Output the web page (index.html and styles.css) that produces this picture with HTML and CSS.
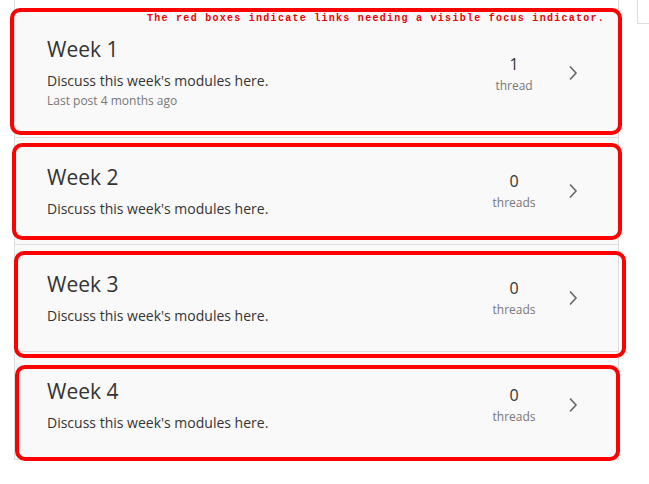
FILE: index.html
```html
<!DOCTYPE html>
<html>
<head>
<meta charset="utf-8">
<link rel="stylesheet" href="styles.css">
</head>
<body>
<div class="page">
  <div class="list">
    <a class="card" href="#">
      <div class="info">
        <div class="title">Week 1</div>
        <div class="desc">Discuss this week's modules here.</div>
        <div class="last">Last post 4 months ago</div>
      </div>
      <div class="meta"><div class="count">1</div><div class="label">thread</div></div>
      <svg class="chev" width="10" height="16" viewBox="0 0 10 16"><path d="M2 1.5 L8 8 L2 14.5" fill="none" stroke="#666" stroke-width="1.6"/></svg>
    </a>
    <a class="card" href="#">
      <div class="info">
        <div class="title">Week 2</div>
        <div class="desc">Discuss this week's modules here.</div>
      </div>
      <div class="meta"><div class="count">0</div><div class="label">threads</div></div>
      <svg class="chev" width="10" height="16" viewBox="0 0 10 16"><path d="M2 1.5 L8 8 L2 14.5" fill="none" stroke="#666" stroke-width="1.6"/></svg>
    </a>
    <a class="card" href="#">
      <div class="info">
        <div class="title">Week 3</div>
        <div class="desc">Discuss this week's modules here.</div>
      </div>
      <div class="meta"><div class="count">0</div><div class="label">threads</div></div>
      <svg class="chev" width="10" height="16" viewBox="0 0 10 16"><path d="M2 1.5 L8 8 L2 14.5" fill="none" stroke="#666" stroke-width="1.6"/></svg>
    </a>
    <a class="card last-card" href="#">
      <div class="info">
        <div class="title">Week 4</div>
        <div class="desc">Discuss this week's modules here.</div>
      </div>
      <div class="meta"><div class="count">0</div><div class="label">threads</div></div>
      <svg class="chev" width="10" height="16" viewBox="0 0 10 16"><path d="M2 1.5 L8 8 L2 14.5" fill="none" stroke="#666" stroke-width="1.6"/></svg>
    </a>
  </div>
  <div class="side"></div>
</div>
<div class="note">The red boxes indicate links needing a visible focus indicator.</div>
<div class="focus f1"></div>
<div class="focus f2"></div>
<div class="focus f3"></div>
<div class="focus f4"></div>
</body>
</html>
```
FILE: styles.css
```css
html, body {
  margin: 0;
  padding: 0;
  background: #fff;
}
body {
  position: relative;
  width: 649px;
  height: 484px;
  overflow: hidden;
  font-family: "Open Sans", "Noto Sans", sans-serif;
  color: #333;
}
.page {
  display: flex;
  align-items: flex-start;
  padding-left: 14px;
}
.list {
  width: 605px;
  border-left: 1px solid #ddd;
  border-right: 1px solid #ddd;
  padding-top: 9px;
}
.side {
  width: 11px;
  height: 23px;
  margin-left: 18px;
  border-left: 1px solid #ddd;
  border-bottom: 1px solid #ddd;
}
.card {
  display: flex;
  align-items: center;
  background: #f9f9f9;
  border-top: 1px solid #ddd;
  padding: 25px 40px 25px 32px;
  text-decoration: none;
  color: #333;
}
.last-card {
  border-bottom: 1px solid #ddd;
  padding-bottom: 26px;
}
.info {
  flex: 1;
}
.title {
  font-size: 21px;
  line-height: 28px;
  font-weight: 400;
  color: #333;
}
.desc {
  font-size: 14px;
  line-height: 20px;
  margin-top: 8px;
  color: #333;
}
.last {
  font-size: 12px;
  line-height: 18px;
  margin-top: 1px;
  padding-bottom: 2px;
  color: #777;
}
.meta {
  width: 60px;
  text-align: center;
  margin-right: 24px;
  margin-bottom: 2px;
}
.count {
  font-size: 16px;
  line-height: 25px;
  color: #333;
}
.label {
  font-size: 12px;
  line-height: 17px;
  color: #777;
}
.chev {
  display: block;
  margin-top: -1px;
}
.note {
  position: absolute;
  left: 147px;
  top: 12px;
  font-family: "Liberation Mono", "Courier New", monospace;
  font-weight: bold;
  font-size: 10px;
  line-height: 14px;
  letter-spacing: 1.27px;
  color: #e00;
  white-space: nowrap;
}
.focus {
  position: absolute;
  border: 4px solid #f00;
  border-radius: 10px;
  box-sizing: border-box;
}
.f1 { left: 10px; top: 8px; width: 612px; height: 127px; }
.f2 { left: 12px; top: 143px; width: 610px; height: 97px; }
.f3 { left: 14px; top: 251px; width: 612px; height: 107px; }
.f4 { left: 15px; top: 365px; width: 605px; height: 96px; }
```
